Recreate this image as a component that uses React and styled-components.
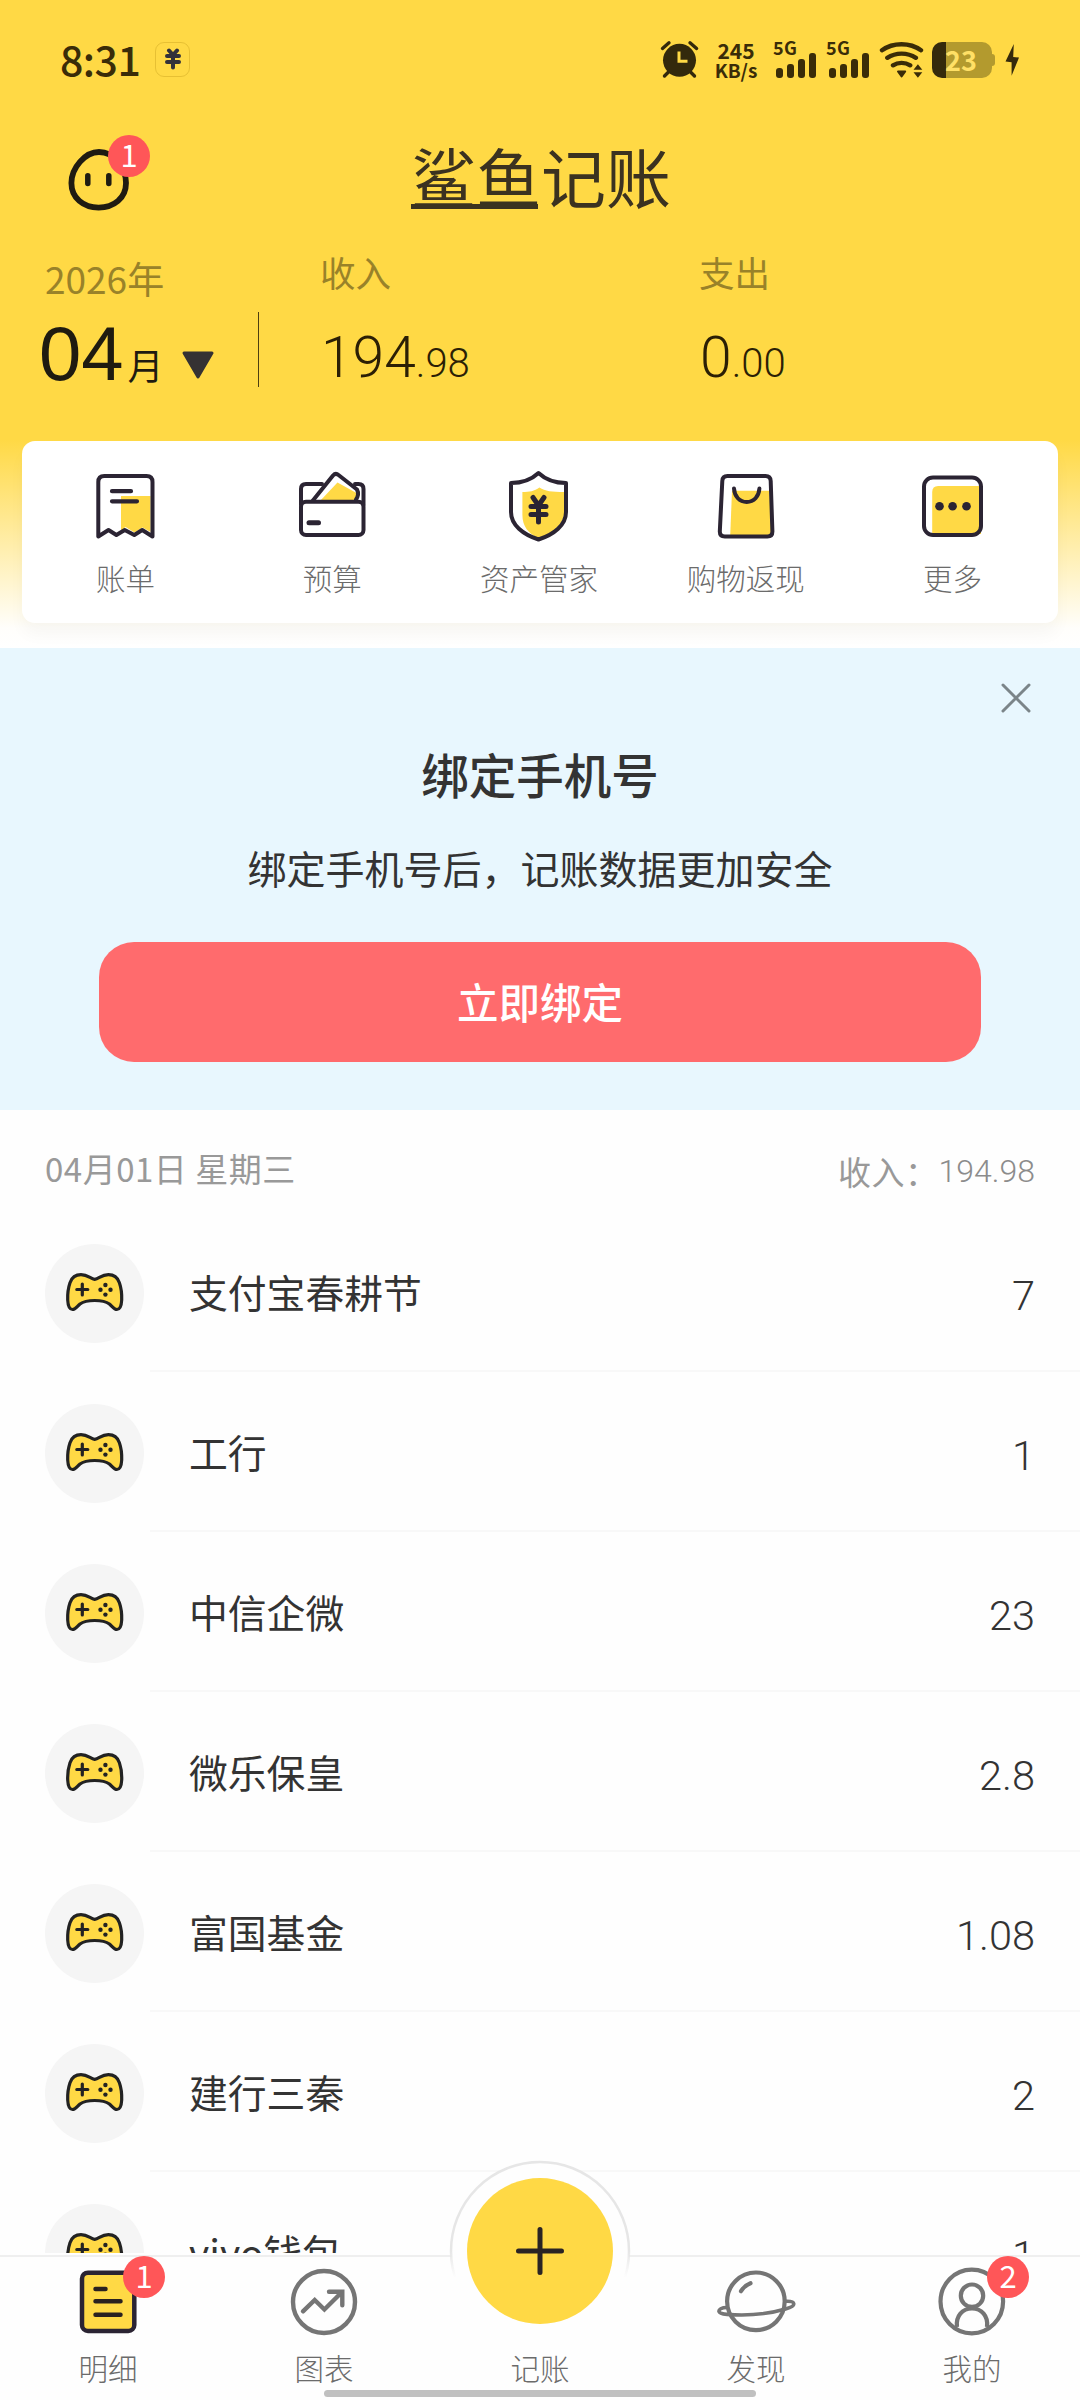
import React from 'react'
import styled, { createGlobalStyle } from 'styled-components'


const YELLOW = '#ffd945'
const INK = '#2b2433'
const GRAY = '#757575'

const GlobalStyle = createGlobalStyle`
    * {
        box-sizing: border-box;
    }

    body {
        margin: 0;
        background: #fff;
        font-family: 'Noto Sans CJK SC', sans-serif;
        color: #333;
    }

    svg {
        display: block;
        flex: none;
    }
`;

const Screen = styled.div`
    display: flex;
    flex-direction: column;
    width: 1080px;
    height: 2400px;
    overflow: hidden;
    background: #fefefe;
`;

const Header = styled.header`
    flex: none;
    height: 648px;
    background: linear-gradient(${YELLOW} 0, ${YELLOW} 440px, #fffefb 628px, #fff 648px);
`;

/* ---- status bar ---- */

const StatusBar = styled.div`
    display: flex;
    align-items: center;
    height: 120px;
    padding: 0 60px 0 60px;
    color: #3a2c08;
`;

const Clock = styled.div`
    width: 80px;
    margin-top: -5px;
    font-size: 41px;
    font-weight: 500;
    line-height: 46px;
    letter-spacing: -0.5px;
    white-space: nowrap;
`;

const YenChip = styled.div`
    display: flex;
    align-items: center;
    justify-content: center;
    width: 35px;
    height: 35px;
    margin-left: 15px;
    margin-top: -2px;
    border: 1px solid rgba(160, 120, 0, 0.25);
    border-radius: 9px;
`;

const StatusIcons = styled.div`
    display: flex;
    align-items: center;
    height: 40px;
    margin-left: auto;
`;

const NetSpeed = styled.div`
    width: 46px;
    margin-left: 13px;
    font-size: 21px;
    font-weight: 700;
    line-height: 20px;
    text-align: center;
    white-space: nowrap;

    span {
        display: block;
        font-size: 19px;
    }
`;

const Signal = styled.div`
    display: flex;
    flex-direction: column;
    width: 44px;
    height: 36px;
    margin-left: ${p => p.$gap}px;
`;

const SignalLabel = styled.div`
    height: 11px;
    font-size: 18px;
    font-weight: 700;
    line-height: 11px;
    letter-spacing: 0.5px;
`;

const SignalBars = styled.div`
    display: flex;
    align-items: flex-end;
    gap: 4.5px;
    padding-left: 3px;
`;

const SignalBar = styled.i`
    width: 6.5px;
    height: ${p => p.$h}px;
    border-radius: 3px;
    background: #3a2c08;
`;

const Wifi = styled.div`
    margin-left: 8px;
`;

const Battery = styled.div`
    display: flex;
    align-items: center;
    justify-content: center;
    width: 60px;
    height: 36px;
    margin-left: 8px;
    padding-right: 2px;
    border-radius: 10px;
    background: linear-gradient(90deg, #352a0c 14px, #b39a2e 14px);
    color: #ffe066;
    font-size: 27px;
    font-weight: 700;
    line-height: 34px;
`;

const BatteryTip = styled.i`
    width: 3px;
    height: 12px;
    margin-right: 9px;
    border-radius: 0 3px 3px 0;
    background: #b39a2e;
`;

/* ---- title and totals ---- */

const TitleBar = styled.div`
    display: grid;
    grid-template-columns: 345px 1fr 345px;
    align-items: center;
    height: 120px;
    padding: 0 66px;
`;

const Face = styled.div`
    position: relative;
    width: 66px;
`;

const Badge = styled.span`
    position: absolute;
    left: ${p => p.$left}px;
    top: ${p => p.$top}px;
    width: 42px;
    height: 42px;
    border-radius: 50%;
    background: #ff5658;
    color: #fff;
    font-size: 31px;
    font-weight: 400;
    line-height: 37px;
    text-align: center;
`;

const Brand = styled.h1`
    position: relative;
    justify-self: start;
    margin: -11px 0 0;
    color: #3b3220;
    font-size: 65px;
    font-weight: 400;
    line-height: 80px;
    white-space: nowrap;

    /* one stroke running under the first two characters */
    &::after {
        content: '';
        position: absolute;
        left: 0;
        bottom: 6px;
        width: 127px;
        height: 5px;
        background: #3b3220;
    }
`;

const Totals = styled.div`
    display: flex;
    height: 201px;
`;

const MonthPicker = styled.div`
    width: 258px;
    padding: 14px 0 0 45px;
`;

const Year = styled.div`
    height: 52px;
    color: #998229;
    font-size: 37px;
    line-height: 48px;
`;

const Month = styled.div`
    display: flex;
    align-items: baseline;
    margin-left: -6px;
    color: #1f1b10;
    font-family: 'Liberation Sans', 'Noto Sans CJK SC', sans-serif;
    font-size: 76px;
    line-height: 96px;

    small {
        margin-left: 4px;
        font-size: 36px;
    }

    svg {
        margin-left: 17px;
    }
`;

const Divider = styled.i`
    width: 1px;
    height: 75px;
    margin-top: 72px;
    background: #4d3f10;
`;

const Total = styled.div`
    width: 379px;
    padding: 8px 0 0 61px;
`;

const TotalLabel = styled.div`
    color: #998229;
    font-size: 35.5px;
    line-height: 48px;
`;

const TotalValue = styled.div`
    margin-top: 27px;
    padding-left: 1px;
    color: #2b1f05;
    font-family: Roboto, sans-serif;
    font-size: 57px;
    font-weight: 300;
    line-height: 70px;

    small {
        font-size: 40px;
    }
`;

/* ---- shortcuts card ---- */

const Shortcuts = styled.div`
    display: flex;
    height: 182px;
    margin: 0 22px;
    padding: 27px 2px 0 0;
    border-radius: 13px;
    background: #fff;
    box-shadow: 0 12px 16px rgba(0, 0, 0, 0.03);
`;

const Shortcut = styled.div`
    display: flex;
    flex: 1;
    flex-direction: column;
    align-items: center;
    color: #6b6b6b;
    font-size: 29.5px;
    font-weight: 300;
    line-height: 40px;
`;

const ShortcutIcon = styled.div`
    height: 89px;
`;

/* ---- bind phone banner ---- */

const Banner = styled.section`
    position: relative;
    display: flex;
    flex: none;
    flex-direction: column;
    align-items: center;
    height: 462px;
    padding-top: 91px;
    background: #e8f7fe;
`;

const Close = styled.button`
    position: absolute;
    top: 34px;
    right: 48px;
    padding: 0;
    border: 0;
    background: none;
`;

const BannerTitle = styled.h2`
    margin: 0;
    font-size: 47.5px;
    font-weight: 500;
    line-height: 70px;
`;

const BannerText = styled.p`
    margin: 29px 0 0;
    font-size: 39px;
    line-height: 58px;
`;

const BindButton = styled.button`
    width: 882px;
    height: 120px;
    margin-top: 46px;
    padding: 0 0 3px;
    border: 0;
    border-radius: 35px;
    background: #ff6b6d;
    color: #fff;
    font-family: inherit;
    font-size: 41.5px;
    font-weight: 500;
`;

/* ---- records ---- */

const Records = styled.main`
    flex: 1;
    min-height: 0;
    overflow: hidden;
`;

const DayHeader = styled.div`
    display: flex;
    align-items: center;
    justify-content: space-between;
    height: 102px;
    padding: 14px 45px 0;
    color: #999;
    font-size: 33px;
    letter-spacing: 0.5px;
`;

const DaySum = styled.div`
    display: flex;
    align-items: center;
    padding-top: 5px;

    b {
        color: #8c8c8c;
        font-family: Roboto, sans-serif;
        font-size: 32px;
        font-weight: 300;
        letter-spacing: 0;
    }
`;

const Record = styled.div`
    display: flex;
    align-items: stretch;
    height: 160px;
    padding-left: 45px;
`;

const RecordIcon = styled.div`
    display: flex;
    align-items: center;
    justify-content: center;
    align-self: center;
    width: 99px;
    height: 99px;
    margin-right: 6px;
    margin-top: 2px;
    padding-bottom: 2px;
    border-radius: 50%;
    background: #f5f5f5;
`;

const RecordBody = styled.div`
    display: flex;
    flex: 1;
    align-items: center;
    justify-content: space-between;
    padding: 0 45px 0 39px;
    border-bottom: 2px solid #f8f8f8;
    font-size: 38.8px;
`;

const Amount = styled.div`
    padding-top: 8px;
    font-family: Roboto, sans-serif;
    font-size: 41.5px;
    font-weight: 300;
`;

/* ---- bottom navigation ---- */

const Nav = styled.nav`
    position: relative;
    flex: none;
    height: 147px;
    background: #fefefe;
`;

const NavLine = styled.div`
    height: 4px;
    border-bottom: 2px solid #efefef;
`;

const NavItems = styled.div`
    display: flex;
    padding-top: 9px;
`;

const NavItem = styled.div`
    position: relative;
    display: flex;
    flex: 1;
    flex-direction: column;
    align-items: center;
    color: #6b6b6b;
    font-size: 29.5px;
    font-weight: 300;
    line-height: 40px;
`;

const NavIcon = styled.div`
    position: relative;
    display: flex;
    justify-content: center;
    width: 84px;
    height: 72px;
    margin-bottom: 9px;
`;

const AddButton = styled.div`
    position: absolute;
    left: 449px;
    top: -93px;
    z-index: 2;
`;

const HomeBar = styled.div`
    position: absolute;
    left: 324px;
    bottom: 3px;
    width: 432px;
    height: 7px;
    border-radius: 4px;
    background: #c0c0c0;
`;

const YenIcon = () => (
    <svg width="18" height="22" viewBox="0 0 18 22" fill="none" stroke="#33313a" strokeWidth="4" strokeLinecap="round">
        <path d="M5 2.5 9 7l4-4.5M3 8h12M3 14h12M9 7v12.5" />
    </svg>
)

const AlarmIcon = () => (
    <svg width="40" height="40" viewBox="0 0 40 40" fill="none" strokeWidth="3.4">
        <path d="M2.5 8.5 9 2.8M30 2.8l6.6 5.7M4.5 36l5-5M34.5 36l-5-5" stroke="#33290c" strokeLinecap="round" />
        <circle cx="19.5" cy="20.3" r="16.5" fill="#33290c" />
        <path d="M19 11.5v9.7h8.5" stroke={YELLOW} strokeWidth="3" />
    </svg>
)

const WifiIcon = () => (
    <svg width="46" height="40" viewBox="0 0 46 40" fill="none" stroke="#3a2c08" strokeWidth="4.4" strokeLinecap="round">
        <path d="M4 10.2C15 2.2 32 2.2 43 10.2M9.3 17.8c8.4-5.600 20.2-5.600 28.6 0M15 25.300c5-3.200 12.200-3.200 17.200 0" />
        <path d="M20 31.500h7.200l-3.600 5z" fill="#3a2c08" strokeWidth="2" strokeLinejoin="round" />
        <path d="M35.500 29.800h8.800l-4.400-5.600zM35.500 32.200h8.800l-4.400 5.600z" fill="#3a2c08" stroke="none" />
    </svg>
)

const BoltIcon = () => (
    <svg width="16" height="36" viewBox="0 0 16 36">
        <path d="M9.8 2 1.5 19.500l6.100.8v13.500L15 15.500 9.200 15z" fill="#352a0c" />
    </svg>
)

const FaceIcon = () => (
    <svg width="66" height="68" viewBox="0 0 66 68" fill="none" stroke="#1f1b12" strokeWidth="5.8" strokeLinecap="round">
        <path d="M33 6C19 6 5.400 22 5.400 37c0 15 12 24.600 27.200 24.600C48 61.600 60 52 60 37 60 21 48 6 33 6z" />
        <path d="M21.800 29.800v7.600M42.800 29.800v7.600" strokeWidth="5.5" />
    </svg>
)

const CaretIcon = () => (
    <svg width="34" height="29" viewBox="0 0 34 29">
        <path d="M3 2h28L17 26z" fill="#353233" stroke="#353233" strokeWidth="3" strokeLinejoin="round" />
    </svg>
)

const BillIcon = () => (
    <svg width="63" height="72" viewBox="0 0 63 72" fill="none" stroke={INK} strokeWidth="4" strokeLinecap="round" strokeLinejoin="round">
        <path d="M27 28h29.500v36l-8-4.500-8 5-9-5.500-4.500 4z" fill={YELLOW} stroke="none" />
        <path d="M4.300 68.500V14Q4.300 8 10.300 8h42.200q6 0 6 6v54.500l-10.300-6.500-7.900 5-9.600-5-8.300 5-7.900-5z" />
        <path d="M18 23.200h19M18 33.300h25" strokeWidth="4.2" />
    </svg>
)

const BudgetIcon = () => (
    <svg width="73" height="72" viewBox="0 0 73 72" fill="none" stroke={INK} strokeWidth="4" strokeLinecap="round" strokeLinejoin="round">
        <path d="M41.500 14.500 24 33h37l-.5-8z" fill={YELLOW} stroke="none" />
        <rect x="5" y="33.700" width="62.500" height="33.300" rx="5" />
        <path d="M5 37V21q0-5 5-5h16M59 16h3.500q5 0 5 5v16" />
        <path d="M16.500 33 37 7.500q2.700-3 5.500-.5L61 21.500q2.500 5-1 10" />
        <path d="M13 54.700h9.500" strokeWidth="5" />
    </svg>
)

const AssetIcon = () => (
    <svg width="67" height="75" viewBox="0 0 67 75" fill="none" stroke={INK} strokeWidth="4" strokeLinecap="round" strokeLinejoin="round">
        <path d="M17.400 24c7 0 12-.8 17-4.500 6 3.700 12 4.500 25 4.500v19c0 13-11 22-26 27-10-4-16-12-16-23z" fill={YELLOW} stroke="none" />
        <path d="M33.500 5C26 12 18 15 6 15v29c0 13 12 22.500 27.500 27.500C49 66.500 61 57 61 44V15C49 15 41 12 33.500 5z" />
        <path d="M28 29.500l5.500 8 5.500-8M26 38.500h15M26 46.500h15M33.500 38v16" strokeWidth="5" />
    </svg>
)

const BagIcon = () => (
    <svg width="62" height="72" viewBox="0 0 62 72" fill="none" stroke={INK} strokeWidth="4" strokeLinecap="round" strokeLinejoin="round">
        <path d="M17 22.700h37.500l2 45.500H15.200z" fill={YELLOW} stroke="none" />
        <path d="M12.500 8h38q5 0 5.200 5l1.700 50.500q0 5-5 5H9.800q-5 0-5-5L7.300 13q.2-5 5.200-5z" />
        <path d="M19 20.500c.5 8 5.500 13.500 12.700 13.500s12.200-5.500 12.700-13.500" />
    </svg>
)

const MoreIcon = () => (
    <svg width="69" height="72" viewBox="0 0 69 72" fill="none">
        <path d="M14.200 24q0-6 6-6H63v48H14.200z" fill={YELLOW} />
        <rect x="6" y="9.500" width="57" height="57.500" rx="9" stroke={INK} strokeWidth="4" />
        <circle cx="21.500" cy="38.200" r="4.300" fill={INK} />
        <circle cx="34.600" cy="38.200" r="4.300" fill={INK} />
        <circle cx="48.500" cy="38.200" r="4.300" fill={INK} />
    </svg>
)

const CloseIcon = () => (
    <svg width="32" height="32" viewBox="0 0 32 32" stroke="#7b8589" strokeWidth="3" strokeLinecap="round">
        <path d="M3 3l26 26M29 3 3 29" />
    </svg>
)

const GamepadIcon = () => (
    <svg width="62" height="42" viewBox="0 0 62 42" fill="none">
        <path
            d="M30.700 8.300C26.500 7.800 24 3.700 17 3.700c-5.500 0-9 2.300-11 8C4 17.500 3.500 24 3.700 29c.3 6 1.500 9.500 4.800 9.500 3 0 4.500-3 7.500-5.500 4-3 9-3.500 14.700-3.500s10.700.5 14.700 3.500c3 2.500 4.500 5.500 7.500 5.500 3.300 0 4.500-3.500 4.800-9.500.2-5-.3-11.500-2.300-17.300-2-5.700-5.500-8-11-8-7 0-9.500 4.100-13.700 4.600z"
            fill={YELLOW}
            stroke="#222"
            strokeWidth="3.2"
            strokeLinejoin="round"
        />
        <path d="M12.800 18.500h11M18.300 13v11" stroke="#222" strokeWidth="3.2" strokeLinecap="round" />
        <g fill="#222">
            <circle cx="41.400" cy="14" r="2.200" />
            <circle cx="36.500" cy="18.700" r="2.200" />
            <circle cx="46.500" cy="18.700" r="2.200" />
            <circle cx="41.400" cy="23.600" r="2.200" />
        </g>
    </svg>
)

const DetailIcon = () => (
    <svg width="64" height="72" viewBox="0 0 64 72" stroke={INK} strokeWidth="4.5" strokeLinecap="round">
        <rect x="6" y="6.700" width="52.300" height="58.300" rx="6" fill={YELLOW} />
        <path d="M19.500 23h10M19.500 35.300h25M19.500 48.700h25" stroke="#2a2120" />
    </svg>
)

const ChartIcon = () => (
    <svg width="72" height="72" viewBox="0 0 72 72" fill="none" stroke={GRAY} strokeWidth="4.4" strokeLinecap="round">
        <circle cx="36" cy="36" r="31" />
        <path d="M15 45.300 26.700 34l9.700 9.500L53.500 26.500M41 25.700h13.300v13.500" />
    </svg>
)

const PlanetIcon = () => (
    <svg width="84" height="72" viewBox="0 0 84 72" fill="none" stroke={GRAY} strokeWidth="4.2" strokeLinecap="round">
        <circle cx="41.900" cy="35.300" r="28.800" />
        <path d="M13 41.500c-5.500 0-8.500 2-8 4 .5 2 4 2.500 8 2.900 20 1.500 42-.5 58.500-5.400 5-1.500 8.500-3 8.300-5.200-.2-2-3.300-2.800-8.800-2.500" strokeWidth="3.600" />
        <path d="M27 25.200q3.500-5.700 9.500-8" />
    </svg>
)

const MineIcon = () => (
    <svg width="72" height="72" viewBox="0 0 72 72" fill="none" stroke={GRAY} strokeWidth="4.2">
        <ellipse cx="35.800" cy="35.500" rx="31.300" ry="31.800" />
        <circle cx="36" cy="29.700" r="11.200" />
        <path d="M21 61c-1.500-11 5.500-18.500 15-18.500S52.500 50 51 61" />
    </svg>
)

const AddIcon = () => (
    <svg width="182" height="184" viewBox="0 0 182 184">
        <defs>
            <linearGradient id="ring" x1="0" y1="0" x2="0" y2="1">
                <stop offset="0.5" stopColor="#e6e6e6" />
                <stop offset="0.65" stopColor="#e6e6e6" stopOpacity="0" />
            </linearGradient>
        </defs>
        <circle cx="91" cy="91" r="89" fill="#fefefe" stroke="url(#ring)" strokeWidth="2.5" />
        <circle cx="91" cy="91" r="73" fill={YELLOW} />
        <path d="M69.500 91h43M91 69.500v43" stroke="#2a2424" strokeWidth="5" strokeLinecap="round" />
    </svg>
)

const shortcuts = [
    { label: '账单', icon: <BillIcon /> },
    { label: '预算', icon: <BudgetIcon /> },
    { label: '资产管家', icon: <AssetIcon /> },
    { label: '购物返现', icon: <BagIcon /> },
    { label: '更多', icon: <MoreIcon /> }
]

const records = [
    { name: '支付宝春耕节', amount: '7' },
    { name: '工行', amount: '1' },
    { name: '中信企微', amount: '23' },
    { name: '微乐保皇', amount: '2.8' },
    { name: '富国基金', amount: '1.08' },
    { name: '建行三秦', amount: '2' },
    { name: 'vivo钱包', amount: '1' }
]

const tabs = [
    { label: '明细', icon: <DetailIcon />, badge: 1 },
    { label: '图表', icon: <ChartIcon /> },
    { label: '记账' },
    { label: '发现', icon: <PlanetIcon /> },
    { label: '我的', icon: <MineIcon />, badge: 2 }
]

const SignalIcon = ({ gap }) => (
    <Signal $gap={gap}>
        <SignalLabel>5G</SignalLabel>
        <SignalBars>
            { [10, 14, 19, 25].map(h => <SignalBar key={h} $h={h} />) }
        </SignalBars>
    </Signal>
)

class App extends React.Component {
    render() {
        return (
            <>
                <GlobalStyle />
                <Screen>
                    <Header>
                        <StatusBar>
                            <Clock>8:31</Clock>
                            <YenChip><YenIcon /></YenChip>
                            <StatusIcons>
                                <AlarmIcon />
                                <NetSpeed>245<span>KB/s</span></NetSpeed>
                                <SignalIcon gap={14} />
                                <SignalIcon gap={9} />
                                <Wifi><WifiIcon /></Wifi>
                                <Battery>23</Battery>
                                <BatteryTip />
                                <BoltIcon />
                            </StatusIcons>
                        </StatusBar>

                        <TitleBar>
                            <Face>
                                <FaceIcon />
                                <Badge $left={42} $top={-11}>1</Badge>
                            </Face>
                            <Brand>鲨鱼记账</Brand>
                        </TitleBar>

                        <Totals>
                            <MonthPicker>
                                <Year>2026年</Year>
                                <Month>04<small>月</small><CaretIcon /></Month>
                            </MonthPicker>
                            <Divider />
                            <Total>
                                <TotalLabel>收入</TotalLabel>
                                <TotalValue>194<small>.98</small></TotalValue>
                            </Total>
                            <Total>
                                <TotalLabel>支出</TotalLabel>
                                <TotalValue>0<small>.00</small></TotalValue>
                            </Total>
                        </Totals>

                        <Shortcuts>
                            { shortcuts.map(s => (
                                <Shortcut key={s.label}>
                                    <ShortcutIcon>{s.icon}</ShortcutIcon>
                                    {s.label}
                                </Shortcut>
                            )) }
                        </Shortcuts>
                    </Header>

                    <Banner>
                        <Close><CloseIcon /></Close>
                        <BannerTitle>绑定手机号</BannerTitle>
                        <BannerText>绑定手机号后，记账数据更加安全</BannerText>
                        <BindButton>立即绑定</BindButton>
                    </Banner>

                    <Records>
                        <DayHeader>
                            <div>04月01日 星期三</div>
                            <DaySum>收入：<b>194.98</b></DaySum>
                        </DayHeader>
                        { records.map(r => (
                            <Record key={r.name}>
                                <RecordIcon><GamepadIcon /></RecordIcon>
                                <RecordBody>
                                    {r.name}
                                    <Amount>{r.amount}</Amount>
                                </RecordBody>
                            </Record>
                        )) }
                    </Records>

                    <Nav>
                        <NavLine />
                        <AddButton><AddIcon /></AddButton>
                        <NavItems>
                            { tabs.map(t => (
                                <NavItem key={t.label}>
                                    <NavIcon>
                                        {t.icon}
                                        { t.badge && <Badge $left={57} $top={-10}>{t.badge}</Badge> }
                                    </NavIcon>
                                    {t.label}
                                </NavItem>
                            )) }
                        </NavItems>
                        <HomeBar />
                    </Nav>
                </Screen>
            </>
        )
    }
}

export default App
